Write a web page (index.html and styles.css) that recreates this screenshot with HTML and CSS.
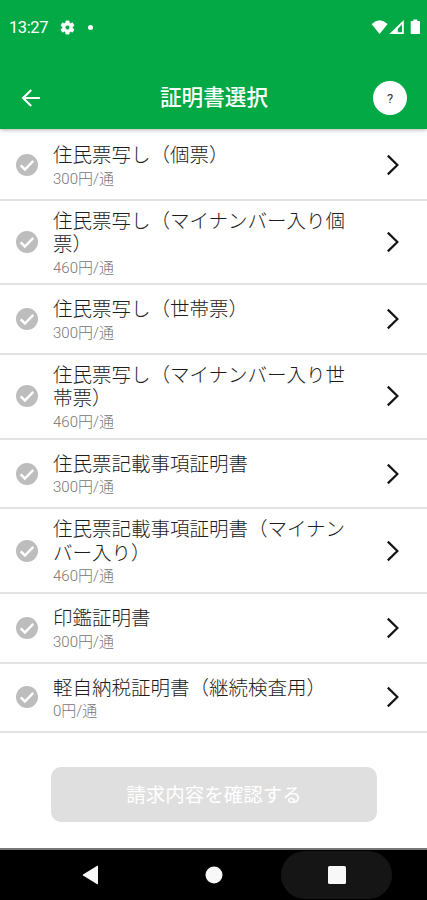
FILE: index.html
```html
<!DOCTYPE html>
<html lang="ja">
<head>
<meta charset="utf-8">
<meta name="viewport" content="width=device-width, initial-scale=1">
<title>証明書選択</title>
<link rel="stylesheet" href="styles.css">
</head>
<body>
<svg class="defs" width="0" height="0" aria-hidden="true">
  <symbol id="check" viewBox="0 0 24 24"><path d="M12 1a11 11 0 1 0 0 22 11 11 0 0 0 0-22z" fill="#bdbdbd"/><path d="M5.7 12.3l4.2 4.2 8.4-8.6" fill="none" stroke="#fff" stroke-width="2.5"/></symbol>
  <symbol id="chevron" viewBox="0 0 14 22"><path d="M1.8 1.6L11.4 11L1.8 20.4" fill="none" stroke="#151515" stroke-width="2.2"/></symbol>
</svg>
<header class="top">
  <div class="status">
    <span class="time">13:27</span>
    <svg class="gear" viewBox="0 0 24 24"><path fill="#fff" stroke="#fff" stroke-width=".6" fill-rule="evenodd" d="M19.14 12.94c.04-.3.06-.61.06-.94s-.02-.64-.07-.94l2.03-1.58a.49.49 0 0 0 .12-.61l-1.92-3.32a.49.49 0 0 0-.59-.22l-2.39.96c-.5-.38-1.03-.7-1.62-.94l-.36-2.54a.48.48 0 0 0-.48-.41h-3.84c-.24 0-.43.17-.47.41l-.36 2.54c-.59.24-1.13.57-1.62.94l-2.39-.96a.48.48 0 0 0-.59.22L2.74 8.87a.48.48 0 0 0 .12.61l2.03 1.58c-.05.3-.09.63-.09.94s.02.64.07.94l-2.03 1.58a.49.49 0 0 0-.12.61l1.92 3.32c.12.22.37.29.59.22l2.39-.96c.5.38 1.03.7 1.62.94l.36 2.54c.05.24.24.41.48.41h3.84c.24 0 .44-.17.47-.41l.36-2.54c.59-.24 1.13-.56 1.62-.94l2.39.96c.22.08.47 0 .59-.22l1.92-3.32a.48.48 0 0 0-.12-.61zM12 15.2a3.2 3.2 0 1 1 0-6.4 3.2 3.2 0 0 1 0 6.4z"/></svg>
    <span class="dot"></span>
    <svg class="signals" viewBox="0 0 50 16" fill="#fff"><path d="M.6 5Q8.6-2.4 16.6 5L8.6 15z"/><path fill-rule="evenodd" d="M18.3 15L32.8 1v14zM26.8 13.2h4.2V5.5L26.8 9.7z"/><path d="M40.3 2h2V.6h4V2h2q.7 0 .7.8v11.4q0 .8-.8.8h-7.6q-.9 0-.9-.8V2.8q0-.8.6-.8z"/></svg>
  </div>
  <div class="appbar">
    <svg class="back" viewBox="0 0 20 20"><path d="M19 10H2.5M10.2 1.9L2.1 10l8.1 8.1" fill="none" stroke="#fff" stroke-width="2.1"/></svg>
    <h1>証明書選択</h1>
    <span class="help">?</span>
  </div>
</header>
<main>
  <ul class="list">
    <li class="row"><svg class="check"><use href="#check"/></svg><div class="text"><p class="name">住民票写し（個票）</p><p class="fee">300円/通</p></div><svg class="chev"><use href="#chevron"/></svg></li>
    <li class="row tall"><svg class="check"><use href="#check"/></svg><div class="text"><p class="name">住民票写し（マイナンバー入り個<br>票）</p><p class="fee">460円/通</p></div><svg class="chev"><use href="#chevron"/></svg></li>
    <li class="row"><svg class="check"><use href="#check"/></svg><div class="text"><p class="name">住民票写し（世帯票）</p><p class="fee">300円/通</p></div><svg class="chev"><use href="#chevron"/></svg></li>
    <li class="row tall"><svg class="check"><use href="#check"/></svg><div class="text"><p class="name">住民票写し（マイナンバー入り世<br>帯票）</p><p class="fee">460円/通</p></div><svg class="chev"><use href="#chevron"/></svg></li>
    <li class="row"><svg class="check"><use href="#check"/></svg><div class="text"><p class="name">住民票記載事項証明書</p><p class="fee">300円/通</p></div><svg class="chev"><use href="#chevron"/></svg></li>
    <li class="row tall"><svg class="check"><use href="#check"/></svg><div class="text"><p class="name">住民票記載事項証明書（マイナン<br>バー入り）</p><p class="fee">460円/通</p></div><svg class="chev"><use href="#chevron"/></svg></li>
    <li class="row"><svg class="check"><use href="#check"/></svg><div class="text"><p class="name">印鑑証明書</p><p class="fee">300円/通</p></div><svg class="chev"><use href="#chevron"/></svg></li>
    <li class="row"><svg class="check"><use href="#check"/></svg><div class="text"><p class="name">軽自納税証明書（継続検査用）</p><p class="fee">0円/通</p></div><svg class="chev"><use href="#chevron"/></svg></li>
  </ul>
  <button class="confirm" disabled>請求内容を確認する</button>
</main>
<nav class="sysnav">
  <span class="key"><svg viewBox="0 0 18 20"><path d="M16 1.2v17.6q0 .8-.8.4L1 10.6q-.8-.6 0-1.2L15.2.8q.8-.4.8.4z" fill="#f8f8f8"/></svg></span>
  <span class="key"><svg viewBox="0 0 18 18"><circle cx="9" cy="9" r="8.5" fill="#f8f8f8"/></svg></span>
  <span class="key pressed"><svg viewBox="0 0 18 18"><rect width="18" height="18" rx="1.5" fill="#f8f8f8"/></svg></span>
</nav>
</body>
</html>
```

FILE: styles.css
```css
* { box-sizing: border-box; margin: 0; padding: 0; }
body {
  width: 427px;
  height: 900px;
  display: flex;
  flex-direction: column;
  overflow: hidden;
  background: #fff;
  font-family: Roboto, "Noto Sans CJK JP", sans-serif;
}
.defs { position: absolute; }
svg { display: block; flex: none; }
.top {
  height: 129px;
  flex: none;
  background: #03a945;
  color: #fff;
  box-shadow: 0 1px 4px rgba(0, 0, 0, .3);
  z-index: 1;
}
.status {
  height: 56px;
  display: flex;
  align-items: center;
  padding: 0 6px 0 9px;
}
.time { font-size: 16.5px; line-height: 20px; width: 50px; letter-spacing: -.4px; }
.gear { width: 17px; height: 17px; margin-top: -2px; }
.dot { width: 5px; height: 5px; border-radius: 50%; background: #fff; margin-left: 12px; margin-top: -2px; }
.signals { width: 50px; height: 16px; margin-left: auto; margin-top: -2px; }
.appbar {
  height: 73px;
  display: flex;
  align-items: center;
  padding: 10px 20px 0 21px;
}
.back { width: 20px; height: 20px; }
h1 { flex: 1; text-align: center; font-size: 21.6px; line-height: 28px; font-weight: 500; padding-left: 14px; }
.help {
  width: 34px;
  height: 34px;
  border-radius: 50%;
  background: #fff;
  color: #333;
  font-size: 13px;
  line-height: 35px;
  text-align: center;
}
main { flex: 1; min-height: 0; }
.list { list-style: none; padding-top: 2.2px; }
.row {
  height: 69.5px;
  display: flex;
  align-items: center;
  padding: 0 27px 0 15px;
  border-bottom: 2px solid #e2e2e2;
}
.tall { height: 84.8px; }
.check { width: 24px; height: 24px; }
.text { flex: 1; padding: 5.4px 0 0 14px; }
.name { font-size: 19.5px; line-height: 23.5px; font-weight: 300; color: #1c1c1c; white-space: nowrap; }
.fee { font-size: 15px; line-height: 23.5px; font-weight: 300; color: #757575; }
.chev { width: 14px; height: 22px; }
.confirm {
  display: block;
  width: 326px;
  height: 55px;
  margin: 34px auto 0 51px;
  padding-top: 3px;
  border: 0;
  border-radius: 10px;
  background: #dfdfdf;
  color: #fff;
  font: 400 19.5px/52px Roboto, "Noto Sans CJK JP", sans-serif;
}
.sysnav {
  height: 52px;
  flex: none;
  display: flex;
  justify-content: center;
  gap: 12px;
  background: #000;
  border-top: 2px solid #777;
  padding-top: 1px;
}
.key { width: 111px; height: 48px; display: flex; align-items: center; justify-content: center; }
.key svg { width: 18px; height: 18px; }
.key:first-child svg { height: 20px; }
.pressed { background: #151515; border-radius: 24px; }
```
